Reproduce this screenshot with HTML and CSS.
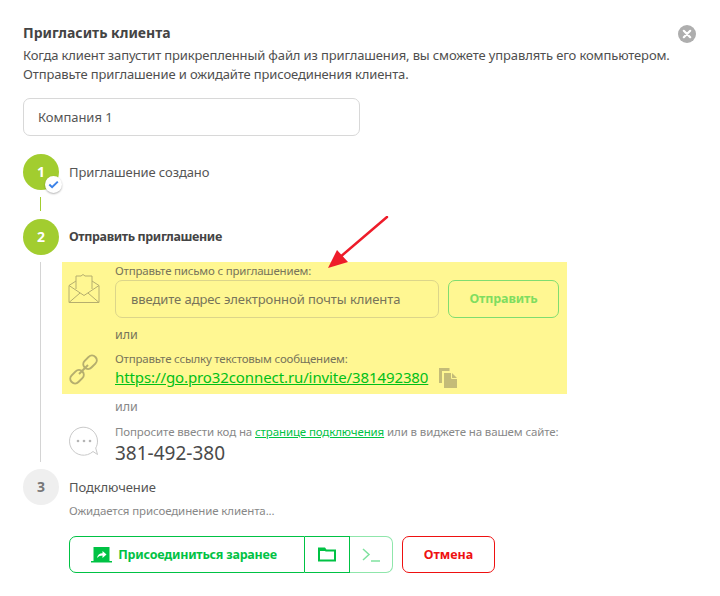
FILE: index.html
```html
<!DOCTYPE html>
<html lang="ru">
<head>
<meta charset="utf-8">
<title>Пригласить клиента</title>
<link rel="stylesheet" href="styles.css">
</head>
<body>
<div class="dialog">
  <button class="close" aria-label="Закрыть"><svg width="18" height="18" viewBox="0 0 18 18"><circle cx="9" cy="9" r="9" fill="#aeaeae"/><path d="M5.8 5.8l6.4 6.4M12.2 5.8l-6.4 6.4" stroke="#fff" stroke-width="2.2" stroke-linecap="round"/></svg></button>
  <h1 class="title">Пригласить клиента</h1>
  <p class="intro">Когда клиент запустит прикрепленный файл из приглашения, вы сможете управлять его компьютером.<br>Отправьте приглашение и ожидайте присоединения клиента.</p>
  <div class="name-field">Компания 1</div>

  <div class="step step-one">
    <div class="rail">
      <div class="circle green">1<span class="badge"><svg width="11" height="9" viewBox="0 0 11 9"><path d="M1.3 4.6l2.8 2.6L9.8 1.6" fill="none" stroke="#3b82e8" stroke-width="2"/></svg></span></div>
      <div class="line short"></div>
    </div>
    <div class="step-body"><div class="step-title">Приглашение создано</div></div>
  </div>

  <div class="step step-two">
    <div class="rail">
      <div class="circle green">2</div>
      <div class="line long"></div>
    </div>
    <div class="step-body">
      <div class="step-title strong">Отправить приглашение</div>
      <div class="highlight">
        <div class="method method-mail">
          <svg class="method-icon" width="32" height="30" viewBox="0 0 32 30" fill="none" stroke="#b5ae6e" stroke-width="1"><path d="M1 11.5L8 7M31 11.5L24 7M1 11.5v17h30v-17M1 28.5l11-9.500M31 28.500l-11-9.500M1 11.500l15 10 15-10"/><path d="M8 15V2h5l2-1.500 2 1.500h7v13"/></svg>
          <div class="method-main">
            <div class="label">Отправьте письмо с приглашением:</div>
            <div class="send-row">
              <div class="email-field">введите адрес электронной почты клиента</div>
              <div class="send-button">Отправить</div>
            </div>
          </div>
        </div>
        <div class="or">или</div>
        <div class="method method-link">
          <svg class="method-icon" width="31" height="31" viewBox="0 0 31 31" fill="none" stroke="#b5ae6e" stroke-width="2"><rect x="1.500" y="18" width="15" height="9.500" rx="4.700" transform="rotate(-45 9 22.700)"/><rect x="14.500" y="3.500" width="15" height="9.500" rx="4.700" transform="rotate(-45 22 8.200)"/><path d="M11 20l9-9"/></svg>
          <div class="method-main">
            <div class="label">Отправьте ссылку текстовым сообщением:</div>
            <div class="link-row">
              <a class="invite-link" href="#">https://go.pro32connect.ru/invite/381492380</a>
              <svg class="copy" width="18" height="20" viewBox="0 0 18 20"><path d="M1.500 15V1.500h9" fill="none" stroke="#c4bc78" stroke-width="3"/><path d="M5 5h8l5 5v10H5z" fill="#c4bc78"/><path d="M12.500 4.500v6h6" fill="none" stroke="#fff792" stroke-width="1"/></svg>
            </div>
          </div>
        </div>
      </div>
      <div class="or outside">или</div>
      <div class="method method-code">
        <svg class="method-icon" width="30" height="30" viewBox="0 0 30 30" fill="none" stroke="#c9c9c9" stroke-width="1"><path d="M24 25.500A14 14 0 1 1 28.500 15c0 2.500-.5 5-1.800 7l1.800 6.500z"/><circle cx="9" cy="15" r="1.300" fill="#b5b5b5" stroke="none"/><circle cx="15" cy="15" r="1.300" fill="#b5b5b5" stroke="none"/><circle cx="21" cy="15" r="1.300" fill="#b5b5b5" stroke="none"/></svg>
        <div class="method-main">
          <div class="label gray">Попросите ввести код на <a class="page-link" href="#">странице подключения</a> или в виджете на вашем сайте:</div>
          <div class="code">381-492-380</div>
        </div>
      </div>
    </div>
  </div>

  <div class="step step-three">
    <div class="rail"><div class="circle idle">3</div></div>
    <div class="step-body">
      <div class="step-title">Подключение</div>
      <div class="label gray waiting">Ожидается присоединение клиента...</div>
      <div class="actions">
        <div class="btn-group">
          <div class="btn-part join"><svg width="21" height="16" viewBox="0 0 21 16"><path d="M2.500 0h16v14h-16z" fill="#00c244"/><path d="M0 14h21v1.500H0z" fill="#00c244"/><path d="M6 11c.5-3 2.500-4.800 5.500-4.800V4l4 3.500-4 3.500V8.500C9.500 8.500 7.500 9.300 6 11z" fill="#fff"/></svg>Присоединиться заранее</div>
          <div class="btn-part folder"><svg width="18" height="15" viewBox="0 0 18 15" fill="none" stroke="#00c244" stroke-width="2"><path d="M1 13.500V1.500h5.500l1.500 2h9v10z"/><path d="M1 3h6" /></svg></div>
          <div class="btn-part terminal"><svg width="18" height="14" viewBox="0 0 18 14" fill="none" stroke="#7fe29f" stroke-width="1.500"><path d="M1 1l6 5.500L1 12"/><path d="M9 13h9"/></svg></div>
        </div>
        <div class="cancel">Отмена</div>
      </div>
    </div>
  </div>

  <svg class="arrow" width="62" height="54" viewBox="0 0 62 54"><path d="M60 1L12 42" stroke="#ee1c2a" stroke-width="2.500" stroke-linecap="round"/><path d="M1 52L10 34 21 46z" fill="#ee1c2a"/></svg>
</div>
</body>
</html>
```
FILE: styles.css
```css
* { box-sizing: border-box; }
html, body { margin: 0; padding: 0; background: #fff; }
body { font-family: "Noto Sans", "Open Sans", sans-serif; color: #4a4a4a; }
.dialog { position: relative; width: 720px; height: 596px; padding: 24px 0 0 23px; overflow: hidden; }
.close { position: absolute; left: 678px; top: 25px; width: 18px; height: 18px; padding: 0; border: 0; background: none; display: block; }
.close svg { display: block; }
.title { margin: 0; font-size: 14px; line-height: 18px; font-weight: 700; color: #444; }
.intro { margin: 4px 0 0; font-size: 13px; line-height: 19px; color: #4f4f4f; letter-spacing: -.125px; }
.name-field { width: 337px; height: 38px; margin-top: 14px; padding-left: 14px; border: 1px solid #d8d8d8; border-radius: 7px; font-size: 13px; line-height: 36px; color: #555; letter-spacing: -.05px; }
.step { display: flex; }
.step-one { margin-top: 18px; height: 65px; }
.step-two { height: 250px; }
.rail { width: 36px; flex: none; display: flex; flex-direction: column; align-items: flex-start; }
.circle { position: relative; width: 36px; height: 36px; flex: none; border-radius: 50%; text-align: center; font-size: 14px; line-height: 36px; font-weight: 700; }
.green { background: #a2cd2f; color: #fff; }
.idle { background: #efefef; color: #777; }
.badge { position: absolute; left: 22px; top: 22px; width: 17px; height: 17px; border-radius: 50%; background: #fff; box-shadow: 0 1px 2px rgba(0,0,0,.3); display: flex; align-items: center; justify-content: center; }
.line { width: 1px; flex: none; margin: 7px 0 0 17px; }
.short { height: 14px; background: #a2cd2f; }
.long { height: 200px; background: #d4d4d4; }
.step-body { margin-left: 10px; flex: 1; }
.step-title { font-size: 13px; line-height: 36px; height: 36px; color: #555; letter-spacing: -.1px; }
.strong { font-weight: 700; font-size: 12.500px; color: #444; letter-spacing: -.38px; }
.highlight { margin: 7px 0 0 -7px; width: 505px; height: 132px; padding-left: 6px; background: #fff792; }
.method { display: flex; }
.method-icon { flex: none; display: block; }
.method-main { flex: none; }
.method-mail { padding-top: 1px; }
.method-mail .method-icon { margin: 11px 15px 0 0; }
.label { font-size: 11.500px; line-height: 16px; color: #77745a; white-space: nowrap; letter-spacing: -.2px; }
.gray { color: #888; letter-spacing: -.12px; }
.send-row { display: flex; gap: 9px; margin-top: 1px; }
.email-field { width: 324px; height: 38px; padding-left: 15px; border: 1px solid #dcd58a; border-radius: 7px; font-size: 13px; line-height: 36px; color: #77745a; letter-spacing: -.08px; }
.send-button { width: 111px; height: 38px; border: 1px solid #7fdd70; border-radius: 7px; text-align: center; font-size: 12.500px; line-height: 36px; font-weight: 700; color: #7fdd60; letter-spacing: -.1px; }
.or { font-size: 12.500px; line-height: 16px; color: #77745a; }
.highlight .or { margin: 9px 0 0 47px; }
.or.outside { margin: 5px 0 0 46px; color: #888; }
.method-link { margin-top: 8px; align-items: flex-start; }
.method-link .method-icon { margin: 3px 16px 0 0; }
.link-row { display: flex; align-items: center; gap: 11px; height: 24px; margin: -2px 0 0 0; }
.invite-link { color: #00c018; font-size: 15px; line-height: 24px; letter-spacing: -.1px; }
.copy { display: block; margin-top: 2px; }
.method-code { margin-top: 9px; }
.method-code .method-icon { margin: 2px 16px 0 0; }
.page-link { color: #00c244; }
.code { font-size: 19px; line-height: 26px; color: #4a4a4a; margin-top: 0; }
.step-three { margin-top: 0; }
.waiting { margin-top: -3px; line-height: 18px; }
.actions { display: flex; gap: 9px; margin-top: 16px; }
.btn-group { display: flex; width: 324px; height: 37px; }
.btn-part { height: 37px; display: flex; align-items: center; justify-content: center; }
.join { width: 236px; gap: 6px; padding-right: 6px; border: 1px solid #00c244; border-radius: 7px 0 0 7px; font-size: 12.500px; font-weight: 700; color: #00c244; letter-spacing: -.22px; }
.folder { width: 45px; border: 1px solid #00c244; border-left: 0; }
.terminal { width: 43px; border: 1px solid #8fe6ab; border-left: 0; border-radius: 0 7px 7px 0; }
.cancel { width: 93px; height: 37px; border: 1px solid #ee1111; border-radius: 7px; text-align: center; font-size: 12.500px; line-height: 35px; font-weight: 700; color: #ee1111; }
.arrow { position: absolute; left: 327px; top: 216px; }
```
